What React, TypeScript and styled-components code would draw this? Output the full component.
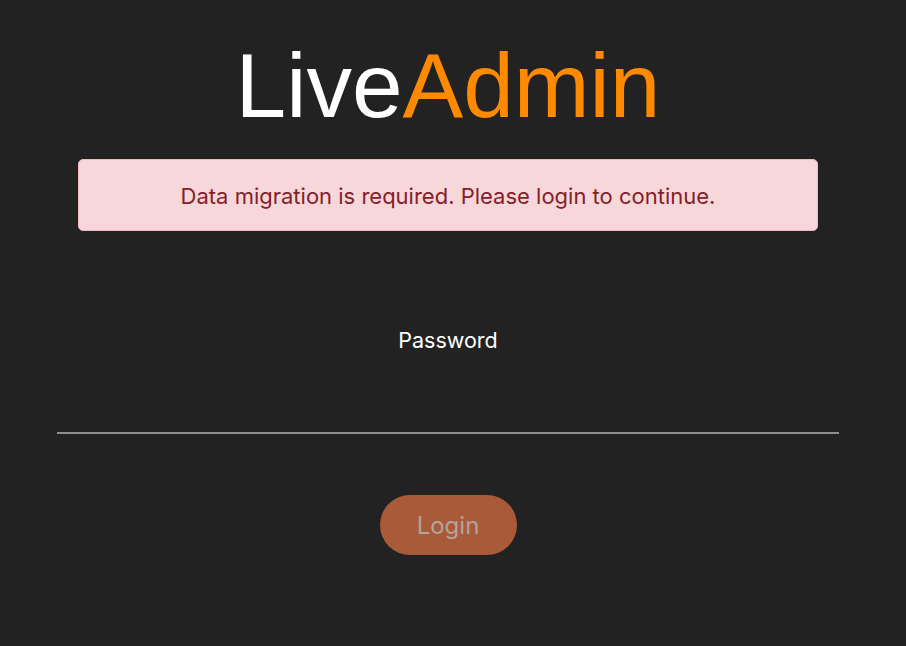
import React from "react";
import styled, { createGlobalStyle } from "styled-components";

const Global = createGlobalStyle`
  html, body { margin: 0; padding: 0; background: #222222; }
  body { font-family: Inter, "Noto Sans", sans-serif; }
`;

const Page = styled.main`
  width: 896px;
  min-height: 646px;
  display: flex;
  flex-direction: column;
  align-items: center;
  padding-top: 34px;
  box-sizing: border-box;
`;

const Logo = styled.h1`
  margin: 0;
  font-family: "Liberation Sans", Arial, sans-serif;
  font-weight: 400;
  font-size: 91px;
  line-height: 104px;
  color: #ffffff;
`;

const Accent = styled.span`
  color: #ff8a00;
`;

const Alert = styled.div`
  margin-top: 21px;
  width: 740px;
  height: 72px;
  box-sizing: border-box;
  display: flex;
  align-items: center;
  justify-content: center;
  background: #f8d7da;
  border: 1px solid #f1b8be;
  border-radius: 5px;
  color: #842029;
  font-size: 22px;
  padding-top: 2px;
`;

const Form = styled.form`
  width: 782px;
  display: flex;
  flex-direction: column;
  align-items: center;
  margin-top: 95px;
`;

const Label = styled.label`
  color: #ffffff;
  font-size: 21.5px;
  line-height: 28px;
`;

const Input = styled.input`
  margin-top: 56px;
  width: 100%;
  height: 24px;
  box-sizing: border-box;
  background: transparent;
  border: none;
  border-bottom: 2px solid #8e8e8e;
  outline: none;
  color: #ffffff;
  font-size: 20px;
`;

const Button = styled.button`
  margin-top: 61px;
  width: 137px;
  height: 60px;
  border: none;
  border-radius: 30px;
  background: #a95a38;
  color: #b3a39c;
  font-family: Inter, "Noto Sans", sans-serif;
  font-size: 24px;
`;

export default function App() {
  return (
    <>
      <Global />
      <Page>
        <Logo>
          Live<Accent>Admin</Accent>
        </Logo>
        <Alert>Data migration is required. Please login to continue.</Alert>
        <Form onSubmit={(e) => e.preventDefault()}>
          <Label htmlFor="pw">Password</Label>
          <Input id="pw" type="password" />
          <Button type="submit" disabled>
            Login
          </Button>
        </Form>
      </Page>
    </>
  );
}
